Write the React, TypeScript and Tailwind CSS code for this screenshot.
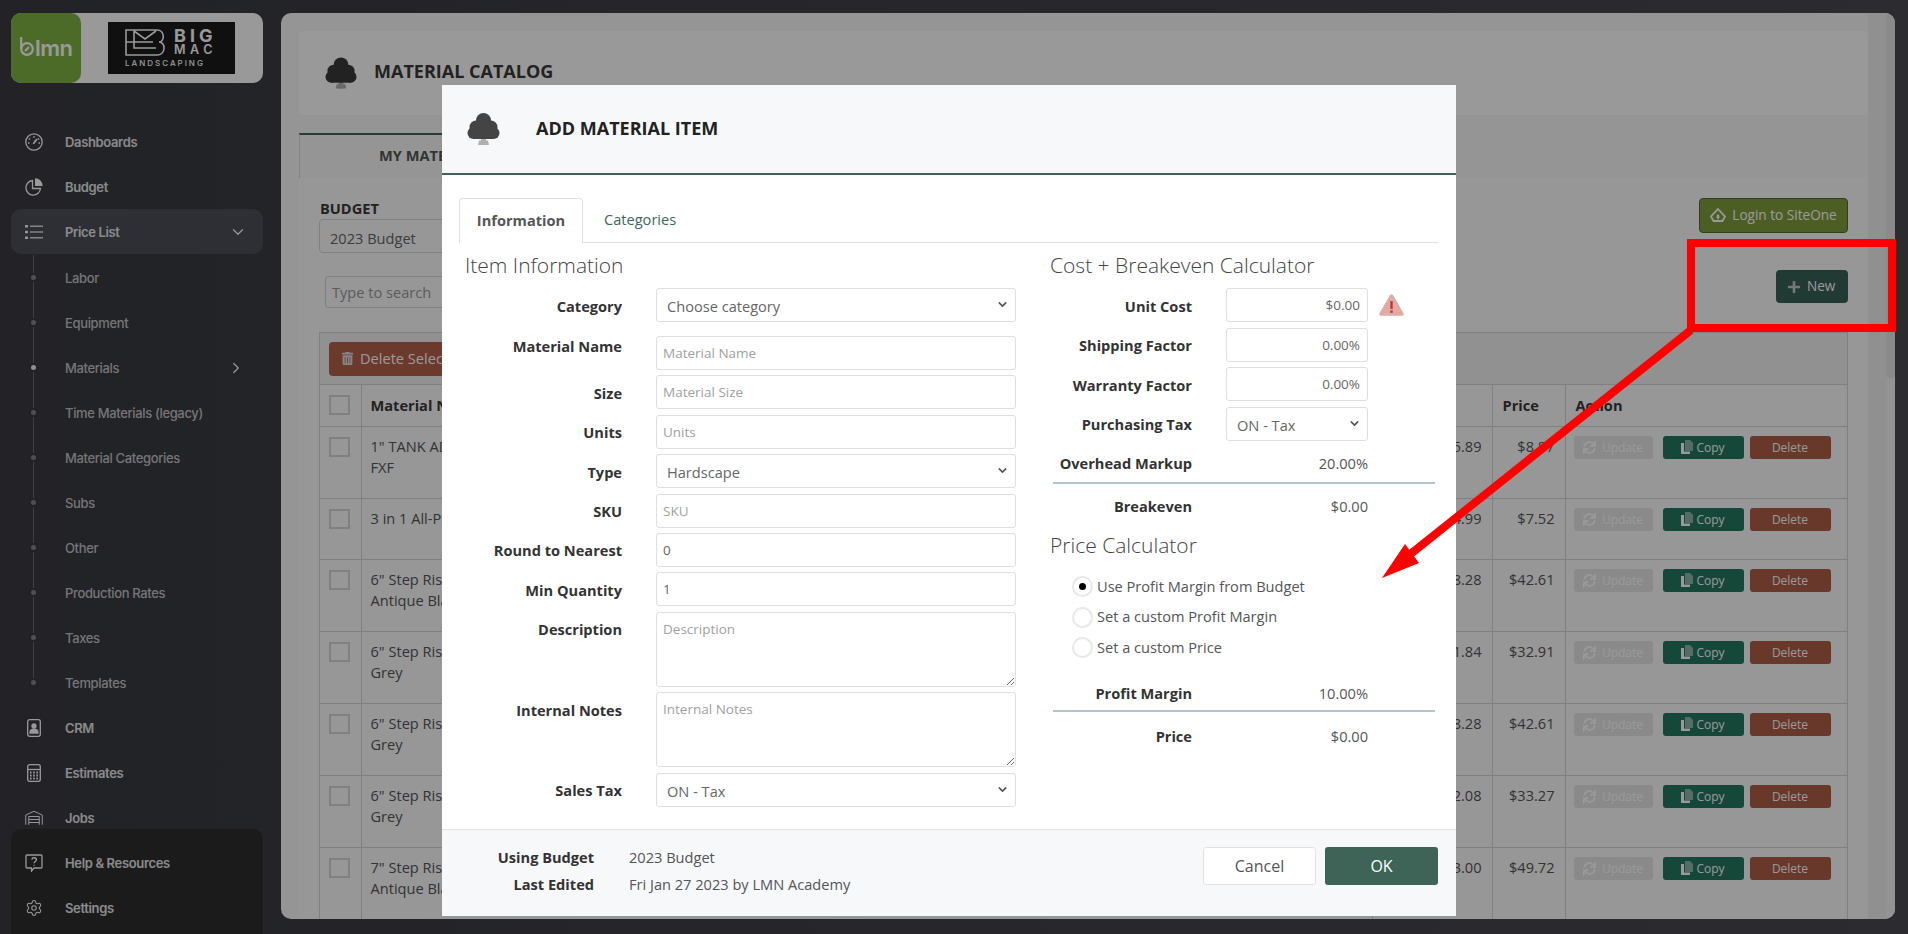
import { ChevronDown, ChevronRight, Settings } from 'lucide-react';
import { FaPlus, FaSync, FaTrashAlt } from 'react-icons/fa';

const subItems = [
  'Labor',
  'Equipment',
  'Materials',
  'Time Materials (legacy)',
  'Material Categories',
  'Subs',
  'Other',
  'Production Rates',
  'Taxes',
  'Templates',
];

const tableRows = [
  { name: ['1" TANK ADAPTER', 'FXF'], cost: '$5.89', price: '$8.87', height: 'h-[72px]' },
  { name: ['3 in 1 All-Purpose Mix'], cost: '$4.99', price: '$7.52', height: 'h-[61px]' },
  { name: ['6" Step Riser', 'Antique Black'], cost: '$28.28', price: '$42.61', height: 'h-[72px]' },
  { name: ['6" Step Riser', 'Grey'], cost: '$21.84', price: '$32.91', height: 'h-[72px]' },
  { name: ['6" Step Riser', 'Grey'], cost: '$28.28', price: '$42.61', height: 'h-[72px]' },
  { name: ['6" Step Riser', 'Grey'], cost: '$22.08', price: '$33.27', height: 'h-[72px]' },
  { name: ['7" Step Riser', 'Antique Black'], cost: '$33.00', price: '$49.72', height: 'h-[72px]' },
];

const TreeIcon = ({ className }: { className: string }) => (
  <svg viewBox="0 0 33 32" className={className}>
    <rect x="14" y="23" width="5" height="9" fill="#b0b0b0" />
    <path d="M12 27.5h9l1 4.5H11z" fill="#b0b0b0" />
    <circle cx="16.5" cy="7.5" r="7.5" fill="currentColor" />
    <circle cx="9" cy="14" r="6.5" fill="currentColor" />
    <circle cx="24" cy="14" r="6.5" fill="currentColor" />
    <circle cx="16.5" cy="14" r="7" fill="currentColor" />
    <circle cx="6.5" cy="20" r="6" fill="currentColor" />
    <circle cx="26.5" cy="20" r="6" fill="currentColor" />
    <rect x="6.5" y="15" width="20" height="11" fill="currentColor" />
  </svg>
);

const CopyIcon = () => (
  <svg viewBox="0 0 12 14" className="w-[12px] h-[14px]">
    <path d="M4 0h5l3 3v8H4z" fill="#8fb3a8" />
    <path d="M0 3h3v8.500h6V14H0z" fill="#ffffff" />
  </svg>
);

const GaugeIcon = () => (
  <svg viewBox="0 0 18 18" className="w-[18px] h-[18px]" fill="none" stroke="currentColor" strokeWidth="1.3">
    <circle cx="9" cy="9" r="8.200" />
    <path d="M9 3.200v1.500M4 5.500l1 1M3 10h1.500M14 5.500l-1 1M15 10h-1.500" strokeWidth="1.500" />
    <path d="M8.300 10.700L12 6" strokeWidth="1.800" />
  </svg>
);

const PieIcon = () => (
  <svg viewBox="0 0 18 18" className="w-[18px] h-[18px]" fill="none" stroke="currentColor" strokeWidth="1.3">
    <path d="M7.500 2.500a7.300 7.300 0 1 0 8 8h-8z" />
    <path d="M10 0.300a7.700 7.700 0 0 1 7.700 7.700H10z" fill="currentColor" stroke="none" />
  </svg>
);

const ListIcon = () => (
  <svg viewBox="0 0 18 14" className="w-[18px] h-[14px]" fill="currentColor">
    <rect x="0" y="0" width="3" height="2.500" rx="0.5" />
    <rect x="0" y="5.800" width="3" height="2.500" rx="0.5" />
    <rect x="0" y="11.500" width="3" height="2.500" rx="0.5" />
    <rect x="5" y="0.600" width="13" height="1.200" />
    <rect x="5" y="6.400" width="13" height="1.200" />
    <rect x="5" y="12.200" width="13" height="1.200" />
  </svg>
);

const BadgeIcon = () => (
  <svg viewBox="0 0 14 18" className="w-[14px] h-[18px]" fill="none" stroke="currentColor" strokeWidth="1.3">
    <rect x="0.7" y="0.7" width="12.6" height="16.6" rx="2" />
    <circle cx="7" cy="7" r="2" fill="currentColor" />
    <path d="M3 14c0-5 8-5 8 0z" fill="currentColor" />
  </svg>
);

const CalcIcon = () => (
  <svg viewBox="0 0 14 18" className="w-[14px] h-[18px]" fill="none" stroke="currentColor" strokeWidth="1.3">
    <rect x="0.7" y="0.7" width="12.6" height="16.6" rx="2" />
    <path d="M1 5.500h12" />
    <path d="M3 8.500h8M3 11.500h8M3 14.500h8" strokeWidth="1.800" strokeDasharray="1.600 1.600" />
  </svg>
);

const GarageIcon = () => (
  <svg viewBox="0 0 24 20" className="w-[24px] h-[20px]" fill="none" stroke="currentColor" strokeWidth="1.3">
    <path d="M1 19V6l11-5 11 5v13" />
    <path d="M5 19V8h14v11M5 12h14M5 16h14" />
  </svg>
);

const HelpIcon = () => (
  <svg viewBox="0 0 18 18" className="w-[18px] h-[18px]" fill="none" stroke="currentColor" strokeWidth="1.3">
    <path d="M2 1h14a1 1 0 0 1 1 1v11a1 1 0 0 1-1 1H9l-2.5 3V14H2a1 1 0 0 1-1-1V2a1 1 0 0 1 1-1z" />
    <path d="M6.800 5.600c.3-2.600 4.600-2.400 4.600.2 0 1.700-2.300 1.800-2.300 3.500M9.100 10.800v1" />
  </svg>
);

const NavItem = ({ icon, label, active }: { icon: React.ReactNode; label: string; active?: boolean }) => (
  <div className={`ml-[11px] w-[252px] h-[45px] flex items-center pl-[14px] rounded-[10px] ${active ? 'bg-[#4d4f58]' : ''}`}>
    <span className="w-[18px] flex justify-center text-white">{icon}</span>
    <span className="ml-[22px] pt-[2px] text-[13px] font-semibold tracking-[-0.35px] text-[#e6e6e8]">{label}</span>
    {active && <ChevronDown size={18} strokeWidth={1.6} className="ml-auto mr-[16px] text-white" />}
  </div>
);

const Sidebar = () => (
  <aside className="w-[281px] h-full flex flex-col shrink-0 font-['Inter',sans-serif]">
    <div className="ml-[11px] w-[252px] mt-[13px] h-[70px] bg-white rounded-[10px] flex items-center shrink-0">
      <div className="w-[70px] h-[70px] bg-[#81b243] rounded-[10px] flex items-center pl-[9px] pb-[1px]">
        <svg viewBox="0 0 14 19" className="w-[14px] h-[19px] mt-[-3px]" fill="none" stroke="#ffffff" strokeWidth="2.200">
          <circle cx="7" cy="12" r="5.800" />
          <path d="M1.200 12V0M5 14l4-4" />
        </svg>
        <span className="text-white text-[22px] leading-none font-semibold tracking-[-0.5px] ml-[1px]">lmn</span>
      </div>
      <div className="ml-[27px] w-[127px] h-[52px] bg-[#1c1c1c] flex flex-col pl-[17px] justify-center text-white">
        <div className="flex items-center gap-[7px]">
          <svg viewBox="0 0 42 27" className="w-[42px] h-[27px]" fill="none" stroke="#ffffff" strokeWidth="1.600">
            <path d="M1 1h31c8 0 8 12 2 12 7 0 7 13-2 13H1zM1 13h27M9 1v18h22M9 2l11 8 11-8" />
          </svg>
          <div className="flex flex-col items-start">
            <span className="text-[18px] font-bold tracking-[4px] leading-[16px]">BIG</span>
            <span className="text-[12.500px] font-semibold tracking-[4.500px] leading-[12px]">MAC</span>
          </div>
        </div>
        <span className="text-[8px] font-medium tracking-[2px] leading-[10px] mt-[2px]">LANDSCAPING</span>
      </div>
    </div>

    <nav className="flex-1 min-h-0 overflow-hidden mt-[36px]">
      <NavItem icon={<GaugeIcon />} label="Dashboards" />
      <NavItem icon={<PieIcon />} label="Budget" />
      <NavItem icon={<ListIcon />} label="Price List" active />
      <div className="relative mt-[1px]">
        <div className="absolute left-[33px] top-0 bottom-[22px] w-px bg-[#6a6b70]" />
        {subItems.map((item) => (
          <div key={item} className="relative h-[45px] flex items-center pl-[65px]">
            <span
              className={`absolute left-[31px] w-[5px] h-[5px] rounded-full ring-2 ring-[#393a41] ${
                item === 'Materials' ? 'bg-[#f0f0f0]' : 'bg-[#85868a]'
              }`}
            />
            <span className="pt-[2px] text-[13px] font-medium tracking-[-0.35px] text-[#c4c4c6]">{item}</span>
            {item === 'Materials' && (
              <ChevronRight size={18} strokeWidth={1.6} className="absolute left-[227px] text-white" />
            )}
          </div>
        ))}
      </div>
      <NavItem icon={<BadgeIcon />} label="CRM" />
      <NavItem icon={<CalcIcon />} label="Estimates" />
      <NavItem icon={<GarageIcon />} label="Jobs" />
    </nav>

    <div className="ml-[11px] w-[252px] h-[105px] pt-[11px] bg-[#2d2d30] rounded-t-[10px] shrink-0">
      <div className="-ml-[11px]">
        <NavItem icon={<HelpIcon />} label="Help & Resources" />
        <NavItem icon={<Settings size={18} strokeWidth={1.4} />} label="Settings" />
      </div>
    </div>
  </aside>
);

const ActionButtons = () => (
  <div className="flex items-center text-[12px] text-white">
    <button className="w-[79px] h-[23px] rounded-[3px] bg-[#e6e6e6] flex items-center justify-center gap-[6px] text-white">
      <FaSync size={13} />
      Update
    </button>
    <button className="ml-[10px] w-[81px] h-[23px] rounded-[3px] bg-[#257861] flex items-center justify-center gap-[3px]">
      <CopyIcon />
      Copy
    </button>
    <button className="ml-[6px] w-[81px] h-[23px] rounded-[3px] bg-[#ae5e46] flex items-center justify-center">
      Delete
    </button>
  </div>
);

const Checkbox = () => <div className="w-[21px] h-[20px] border-2 border-[#d5d5d5] bg-[#fcfcfc]" />;

const MainPanel = () => (
  <main className="flex-1 min-w-0 mt-[13px] mb-[15px] mr-[13px] bg-[#f9f9f9] rounded-[10px] overflow-hidden flex">
    <div className="w-[1569px] ml-[18px] shrink-0">
      <div className="mt-[18px] h-[84px] bg-white rounded-[5px] flex items-center pl-[26px]">
        <TreeIcon className="w-[32px] h-[32px] text-[#3a3a3a]" />
        <h1 className="ml-[17px] pb-[3px] text-[18px] font-bold text-[#393939]">MATERIAL CATALOG</h1>
      </div>

      <div className="mt-[18px] h-[45px] flex">
        <div className="w-[270px] border-t-2 border-l border-t-[#3e6658] border-l-[#d5d5d5] pl-[79px] pt-[10px] text-[14.600px] font-bold text-[#555555]">
          MY MATERIALS
        </div>
      </div>

      <div className="bg-[#fcfcfc] px-[20px] pt-[20px]">
        <div className="h-[55px] flex justify-between items-start">
          <div className="w-[350px]">
            <div className="ml-[1px] text-[14.600px] leading-[20px] font-bold text-[#393939]">BUDGET</div>
            <div className="mt-[1px] h-[34px] border border-[#d5d5d5] rounded-[4px] flex items-center px-[10px] pt-[5px] text-[14.600px] text-[#666666]">
              2023 Budget
            </div>
          </div>
          <button className="w-[149px] h-[35px] rounded-[4px] bg-[#809d3f] border border-[#4f6a35] flex items-center justify-center gap-[6px] text-[13.600px] text-white">
            <svg viewBox="0 0 16 16" className="w-[16px] h-[16px]" fill="none" stroke="#ffffff" strokeWidth="1.800">
              <path d="M8 1l7 7.500-2.500 4.500h-9L1 8.500z" />
              <path d="M8 6c2 1.500 2 4 0 5.500-2-1.500-2-4 0-5.500z" fill="#ffffff" stroke="none" />
            </svg>
            Login to SiteOne
          </button>
        </div>

        <div className="mt-[17px] h-[38px] flex justify-between items-start">
          <div className="ml-[6px] mt-[6px] w-[320px] h-[32px] border border-[#d5d5d5] rounded-[4px] flex items-center px-[6px] pt-[1px] text-[14.600px] text-[#999999]">
            Type to search
          </div>
          <button className="w-[72px] h-[33px] rounded-[4px] bg-[#3a6158] flex items-center pl-[11px] gap-[6px] text-[13.600px] text-white">
            <FaPlus size={14} className="text-[#c8c8c8]" />
            New
          </button>
        </div>

        <div className="mt-[24px] border border-b-0 border-[#d5d5d5]">
          <div className="h-[52px] bg-[#f2f2f2] flex items-center pl-[9px] border-b border-[#d5d5d5]">
            <button className="h-[34px] px-[12px] rounded-[4px] bg-[#b4614a] flex items-center gap-[6px] text-[14.600px] text-white">
              <FaTrashAlt size={13} className="text-[#e0e0e0]" />
              Delete Selected
            </button>
          </div>
          <table className="w-full table-fixed border-collapse text-[14.600px] leading-[21px] text-[#555555]">
            <colgroup>
              <col className="w-[41px]" />
              <col />
              <col className="w-[120px]" />
              <col className="w-[73px]" />
              <col className="w-[282px]" />
            </colgroup>
            <thead>
              <tr className="h-[41px] font-bold text-[#393939] text-left">
                <th className="border border-t-0 border-l-0 border-[#d5d5d5] pl-[9px]">
                  <Checkbox />
                </th>
                <th className="border border-t-0 border-[#d5d5d5] pl-[9px] font-bold">Material Name</th>
                <th className="border border-t-0 border-[#d5d5d5] pl-[10px] font-bold">Cost</th>
                <th className="border border-t-0 border-[#d5d5d5] pl-[10px] font-bold">Price</th>
                <th className="border border-t-0 border-r-0 border-[#d5d5d5] pl-[10px] font-bold">Action</th>
              </tr>
            </thead>
            <tbody>
              {tableRows.map((row, i) => (
                <tr key={i} className={row.height}>
                  <td className="border border-l-0 border-[#d5d5d5] pl-[9px] pt-[10px] align-top">
                    <Checkbox />
                  </td>
                  <td className="border border-[#d5d5d5] pl-[9px] pt-[9px] align-top">
                    {row.name[0]}
                    {row.name[1] && <br />}
                    {row.name[1]}
                  </td>
                  <td className="border border-[#d5d5d5] pr-[10px] pt-[9px] align-top text-right">{row.cost}</td>
                  <td className="border border-[#d5d5d5] pr-[10px] pt-[9px] align-top text-right">{row.price}</td>
                  <td className="border border-r-0 border-[#d5d5d5] pl-[8px] pt-[9px] align-top">
                    <ActionButtons />
                  </td>
                </tr>
              ))}
            </tbody>
          </table>
        </div>
      </div>
    </div>
    <div className="w-[18px] shrink-0 bg-[#f0f0f0]" />
    <div className="w-[9px] shrink-0 bg-[#f5f5f5]">
      <div className="h-[365px] bg-[#e6e6e6] rounded-b-[4px]" />
    </div>
  </main>
);

const inputClass =
  'border border-[#dfdfdf] rounded-[3px] bg-white outline-none text-[13.500px] text-[#666666] placeholder:text-[#a0a0a0]';

const FormInput = ({ placeholder, value }: { placeholder?: string; value?: string }) => (
  <input
    readOnly
    placeholder={placeholder}
    defaultValue={value}
    className={`${inputClass} w-full h-[34px] px-[6px]`}
  />
);

const FormSelect = ({ value }: { value: string }) => (
  <div className="relative">
    <select
      defaultValue={value}
      className={`${inputClass} appearance-none w-full h-[34px] pl-[10px] pr-[20px] pt-[4px] text-[14.600px]`}
    >
      <option>{value}</option>
    </select>
    <ChevronDown size={13} strokeWidth={3} className="absolute right-[7px] top-[10px] text-[#555555]" />
  </div>
);

const FormArea = ({ placeholder }: { placeholder: string }) => (
  <textarea
    readOnly
    placeholder={placeholder}
    className={`${inputClass} w-full h-[75px] px-[6px] py-[6px] block`}
  />
);

const FormRow = ({ label, children, top = 'pt-[7.500px]' }: { label: string; children: React.ReactNode; top?: string }) => (
  <div className="flex">
    <label className={`w-[157px] shrink-0 text-right text-[14.600px] leading-[20px] font-bold text-[#333333] ${top}`}>
      {label}
    </label>
    <div className="ml-[34px] w-[360px]">{children}</div>
  </div>
);

const CalcInputRow = ({ label, value, warn }: { label: string; value: string; warn?: boolean }) => (
  <div className="flex items-center h-[34px]">
    <label className="w-[142px] shrink-0 text-right text-[14.600px] font-bold text-[#333333] pt-[3px]">{label}</label>
    <input
      readOnly
      defaultValue={value}
      className={`${inputClass} ml-[34px] w-[142px] h-[34px] px-[7px] text-right`}
    />
    {warn && (
      <svg viewBox="0 0 25 22" className="ml-[11px] w-[25px] h-[22px]">
        <path d="M12.500 0.500c1 0 1.600.6 2.100 1.400l10 17.500c.6 1.200-.1 2.300-1.400 2.300H1.800C.5 21.700-.2 20.600.4 19.400l10-17.500c.5-.8 1.100-1.400 2.100-1.400z" fill="#e0aaa5" />
        <rect x="11.300" y="7" width="2.400" height="8" fill="#c0392b" />
        <rect x="11.300" y="16.500" width="2.400" height="2.400" fill="#c0392b" />
      </svg>
    )}
  </div>
);

const CalcValueRow = ({ label, value, className }: { label: string; value: string; className: string }) => (
  <div className={`flex text-[14.600px] leading-[20px] ${className}`}>
    <span className="w-[142px] shrink-0 text-right font-bold text-[#333333]">{label}</span>
    <span className="ml-[34px] w-[142px] text-right text-[#555555]">{value}</span>
  </div>
);

const Radio = ({ label, checked }: { label: string; checked?: boolean }) => (
  <div className="flex items-center h-[21px] ml-[22px]">
    <span className="w-[21px] h-[21px] rounded-full border-2 border-[#e8e8e8] flex items-center justify-center">
      {checked && <span className="w-[7px] h-[7px] rounded-full bg-black" />}
    </span>
    <span className="ml-[4px] text-[14.600px] text-[#555555]">{label}</span>
  </div>
);

const Modal = () => (
  <div className="absolute left-[442px] top-[85px] w-[1014px] h-[831px] bg-white flex flex-col">
    <div className="h-[90px] bg-[#f7f8fa] border-b-2 border-[#3e6658] flex items-center pl-[25px] shrink-0">
      <TreeIcon className="w-[33px] h-[32px] text-[#444444]" />
      <h2 className="ml-[36px] pb-[2px] text-[18px] font-bold text-[#222222]">ADD MATERIAL ITEM</h2>
    </div>

    <div className="flex-1 min-h-0">
      <div className="mt-[23px] ml-[17px] mr-[18px] h-[45px] border-b border-[#e2e2e2] flex text-[14.600px]">
        <div className="w-[124px] h-[45px] border border-b-0 border-[#e2e2e2] rounded-t-[4px] bg-white flex items-center justify-center font-bold text-[#555555]">
          Information
        </div>
        <div className="ml-[21px] flex items-center text-[#3e6658]">Categories</div>
      </div>

      <div className="flex">
        <div className="ml-[23px] w-[551px]">
          <h3 className="mt-[8px] text-[21px] leading-[28px] font-light text-[#444444]">Item Information</h3>
          <div className="mt-[9px] flex flex-col gap-[5.400px]">
            <div className="mb-[8.600px]">
              <FormRow label="Category"><FormSelect value="Choose category" /></FormRow>
            </div>
            <FormRow label="Material Name" top="pt-[0px]"><FormInput placeholder="Material Name" /></FormRow>
            <FormRow label="Size"><FormInput placeholder="Material Size" /></FormRow>
            <FormRow label="Units"><FormInput placeholder="Units" /></FormRow>
            <FormRow label="Type"><FormSelect value="Hardscape" /></FormRow>
            <FormRow label="SKU"><FormInput placeholder="SKU" /></FormRow>
            <FormRow label="Round to Nearest"><FormInput value="0" /></FormRow>
            <FormRow label="Min Quantity"><FormInput value="1" /></FormRow>
            <FormRow label="Description"><FormArea placeholder="Description" /></FormRow>
            <FormRow label="Internal Notes"><FormArea placeholder="Internal Notes" /></FormRow>
            <FormRow label="Sales Tax"><FormSelect value="ON - Tax" /></FormRow>
          </div>
        </div>

        <div className="ml-[34px] w-[385px]">
          <h3 className="mt-[8px] text-[21px] leading-[28px] font-light text-[#444444]">Cost + Breakeven Calculator</h3>
          <div className="mt-[9px] flex flex-col gap-[5.600px]">
            <CalcInputRow label="Unit Cost" value="$0.00" warn />
            <CalcInputRow label="Shipping Factor" value="0.00%" />
            <CalcInputRow label="Warranty Factor" value="0.00%" />
            <div className="flex items-center h-[34px]">
              <label className="w-[142px] shrink-0 text-right text-[14.600px] font-bold text-[#333333] pt-[3px]">
                Purchasing Tax
              </label>
              <div className="ml-[34px] w-[142px]"><FormSelect value="ON - Tax" /></div>
            </div>
          </div>
          <CalcValueRow label="Overhead Markup" value="20.00%" className="mt-[12px]" />
          <div className="mt-[9px] ml-[3px] w-[382px] h-[2px] bg-[#b0c6c4]" />
          <CalcValueRow label="Breakeven" value="$0.00" className="mt-[12px]" />
          <h3 className="mt-[15px] text-[21px] leading-[28px] font-light text-[#444444]">Price Calculator</h3>
          <div className="mt-[17.500px] flex flex-col gap-[9.500px]">
            <Radio label="Use Profit Margin from Budget" checked />
            <Radio label="Set a custom Profit Margin" />
            <Radio label="Set a custom Price" />
          </div>
          <CalcValueRow label="Profit Margin" value="10.00%" className="mt-[25px]" />
          <div className="mt-[7px] ml-[3px] w-[382px] h-[2px] bg-[#b0c6c4]" />
          <CalcValueRow label="Price" value="$0.00" className="mt-[14px]" />
        </div>
      </div>
    </div>

    <div className="h-[87px] shrink-0 bg-[#f7f8fa] border-t border-[#e2e2e2] flex justify-between pr-[18px]">
      <div className="pt-[14px] text-[14.600px] leading-[27px]">
        <div className="flex">
          <span className="w-[152px] text-right font-bold text-[#333333]">Using Budget</span>
          <span className="ml-[35px] text-[#555555]">2023 Budget</span>
        </div>
        <div className="flex">
          <span className="w-[152px] text-right font-bold text-[#333333]">Last Edited</span>
          <span className="ml-[35px] text-[#555555]">Fri Jan 27 2023 by LMN Academy</span>
        </div>
      </div>
      <div className="pt-[17px] flex gap-[9px] text-[16px]">
        <button className="w-[113px] h-[38px] bg-white border border-[#e2e2e2] rounded-[3px] text-[#555555]">Cancel</button>
        <button className="w-[113px] h-[38px] bg-[#3e6458] rounded-[3px] text-white">OK</button>
      </div>
    </div>
  </div>
);

const Annotation = () => (
  <svg viewBox="0 0 1908 934" className="absolute inset-0 w-[1908px] h-[934px] pointer-events-none">
    <rect x="1691" y="243" width="201" height="85" fill="none" stroke="#ff0000" strokeWidth="8" />
    <path d="M1691 330L1408 556" stroke="#ff0000" strokeWidth="8" />
    <path d="M1382 578L1405 544L1419 563Z" fill="#ff0000" />
  </svg>
);

export default function App() {
  return (
    <div className="relative w-[1908px] h-[934px] overflow-hidden flex bg-gradient-to-r from-[#393a41] to-[#4a4950] font-['Open_Sans',sans-serif]">
      <Sidebar />
      <MainPanel />
      <div className="absolute inset-0 bg-black/40" />
      <Modal />
      <Annotation />
    </div>
  );
}
